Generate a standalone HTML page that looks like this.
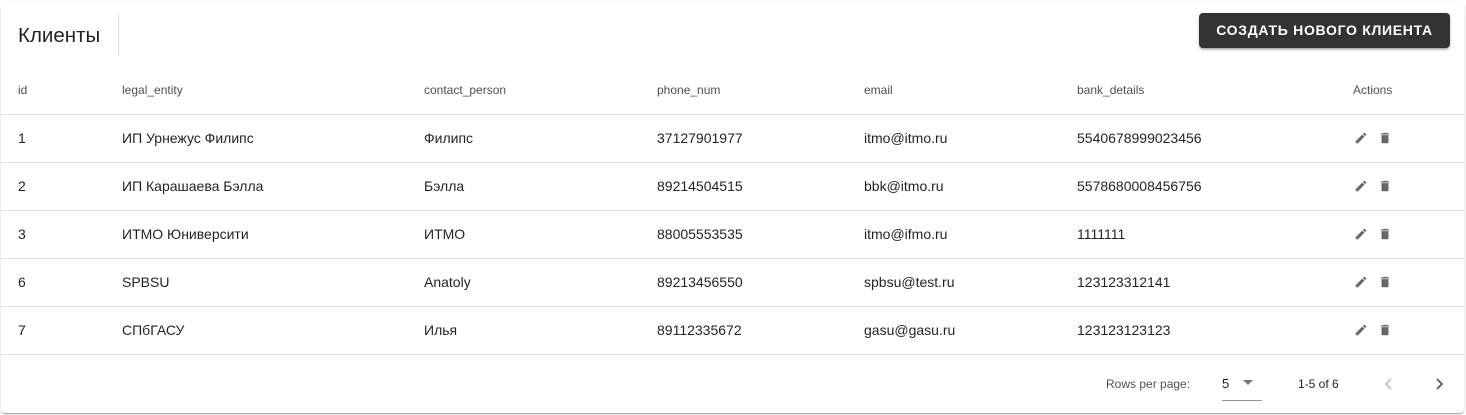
<!DOCTYPE html>
<html><head><meta charset="utf-8"><style>
*{box-sizing:border-box;margin:0;padding:0}
body{width:1466px;height:415px;background:#fff;font-family:"Liberation Sans",Arial,sans-serif;color:rgba(0,0,0,.87);position:relative;overflow:hidden}
.card{position:absolute;left:1px;top:3px;width:1463px;height:410px;background:#fff;border-radius:4px;box-shadow:0 2px 1px -1px rgba(0,0,0,.2),0 1px 1px 0 rgba(0,0,0,.14),0 1px 3px 0 rgba(0,0,0,.12)}
.abs{position:absolute;white-space:nowrap}
.title{left:17px;top:21px;font-size:20.5px;color:rgba(0,0,0,.87)}
.div{left:117px;top:12px;width:1px;height:40px;background:#ddd}
.btn{left:1198px;top:10px;width:251px;height:35px;background:#333;color:#fff;border-radius:4px;font-size:14px;font-weight:bold;letter-spacing:.7px;text-align:center;line-height:35px;box-shadow:0 3px 1px -2px rgba(0,0,0,.2),0 2px 2px 0 rgba(0,0,0,.14),0 1px 5px 0 rgba(0,0,0,.12)}
.h{font-size:12px;color:rgba(0,0,0,.7);top:80px}
.line{left:0;width:1463px;height:1px;background:#e0e0e0}
.c{font-size:14px;color:rgba(0,0,0,.87)}
.f{font-size:12px;color:rgba(0,0,0,.7)}
</style></head><body><div class="card">
<div class="abs title">Клиенты</div><div class="abs div"></div>
<div class="abs btn">СОЗДАТЬ НОВОГО КЛИЕНТА</div>
<div class="abs h" style="left:17px">id</div>
<div class="abs h" style="left:121px">legal_entity</div>
<div class="abs h" style="left:423px">contact_person</div>
<div class="abs h" style="left:656px">phone_num</div>
<div class="abs h" style="left:863px">email</div>
<div class="abs h" style="left:1076px">bank_details</div>
<div class="abs h" style="left:1352px">Actions</div>
<div class="abs line" style="top:111px"></div>
<div id="rows"></div>
<div class="abs line" style="top:351px"></div>
<div class="abs f" style="left:1105px;top:374px">Rows per page:</div>
<div class="abs f" style="left:1221px;top:373px;font-size:13px;color:rgba(0,0,0,.87)">5</div>
<svg class="abs" style="left:1240px;top:375px" width="14" height="10"><path d="M2 2l5 5 5-5z" fill="rgba(0,0,0,.54)"/></svg>
<div class="abs" style="left:1221px;top:397px;width:40px;height:1px;background:rgba(0,0,0,.42)"></div>
<div class="abs f" style="left:1297px;top:374px;color:rgba(0,0,0,.87)">1-5 of 6</div>
<svg class="abs" style="left:1380px;top:373px" width="16" height="16"><path d="M10 3L5 8l5 5" stroke="rgba(0,0,0,.26)" stroke-width="1.6" fill="none"/></svg>
<svg class="abs" style="left:1430px;top:373px" width="16" height="16"><path d="M6 3l5 5-5 5" stroke="rgba(0,0,0,.7)" stroke-width="1.6" fill="none"/></svg>
</div>
<script>
var d=[["1","ИП Урнежус Филипс","Филипс","37127901977","itmo@itmo.ru","5540678999023456"],["2","ИП Карашаева Бэлла","Бэлла","89214504515","bbk@itmo.ru","5578680008456756"],["3","ИТМО Юниверсити","ИТМО","88005553535","itmo@ifmo.ru","1111111"],["6","SPBSU","Anatoly","89213456550","spbsu@test.ru","123123312141"],["7","СПбГАСУ","Илья","89112335672","gasu@gasu.ru","123123123123"]];
var x=[17,121,423,656,863,1076],h="";
d.forEach(function(r,i){var t=111+i*48;
r.forEach(function(v,j){h+='<div class="abs c" style="left:'+x[j]+'px;top:'+(t+16)+'px">'+v+'</div>'});
h+='<svg class="abs" style="left:1353px;top:'+(t+17)+'px" width="14" height="14" viewBox="0 0 24 24"><path fill="rgba(0,0,0,.6)" d="M3 17.25V21h3.75L17.81 9.94l-3.75-3.75L3 17.25zM20.71 7.04a1 1 0 000-1.41l-2.34-2.34a1 1 0 00-1.41 0l-1.83 1.83 3.75 3.75 1.83-1.83z"/></svg>';
h+='<svg class="abs" style="left:1377px;top:'+(t+17)+'px" width="14" height="14" viewBox="0 0 24 24"><path fill="rgba(0,0,0,.6)" d="M6 19c0 1.1.9 2 2 2h8c1.1 0 2-.9 2-2V7H6v12zM19 4h-3.5l-1-1h-5l-1 1H5v2h14V4z"/></svg>';
if(i<4)h+='<div class="abs line" style="top:'+(t+48)+'px"></div>';});
document.getElementById('rows').outerHTML=h;
</script></body></html>
